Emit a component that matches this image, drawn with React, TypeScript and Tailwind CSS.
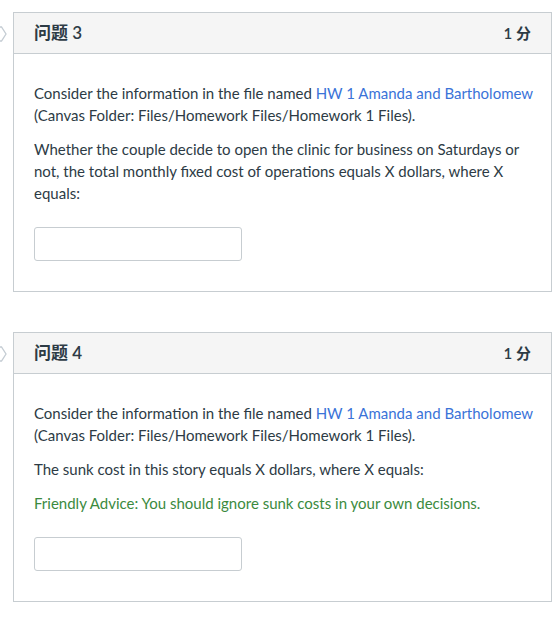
import type { ReactNode } from 'react';

function Flag() {
  return (
    <svg width="8" height="16" viewBox="0 0 8 16" className="absolute left-0 top-[14px]">
      <path d="M-4 1 H1.5 L6 8 L1.5 15 H-4" fill="none" stroke="#c4ccd3" strokeWidth="1.3" />
    </svg>
  );
}

function QuestionCard({ num, children }: { num: number; children: ReactNode }) {
  return (
    <div className="relative pl-[13px] pr-[8px]">
      <Flag />
      <div className="border border-[#c7cdd1] bg-white">
        <div className="flex h-[41px] items-center justify-between border-b border-[#c7cdd1] bg-[#f5f5f5] px-[20px] text-[17px] font-semibold text-[#2d3b45]">
          <span>问题 {num}</span>
          <span className="text-[15px]">1 分</span>
        </div>
        <div className="pl-[20px] pr-[12px] pt-[28px] pb-[30px] text-[15px] leading-[22px] text-[#2d3b45]">
          {children}
          <input
            type="text"
            className="mt-[23px] block h-[34px] w-[208px] rounded-[3px] border border-[#c7cdd1] bg-white"
          />
        </div>
      </div>
    </div>
  );
}

function FileRef() {
  return (
    <p>
      Consider the information in the file named{' '}
      <span className="text-[#3a73d8]">HW 1 Amanda and Bartholomew</span> (Canvas Folder:
      Files/Homework Files/Homework 1 Files).
    </p>
  );
}

export default function App() {
  return (
    <div
      className="min-h-[620px] bg-white pt-[12px]"
      style={{ fontFamily: 'Lato, "Noto Sans CJK SC", sans-serif' }}
    >
      <div className="flex flex-col gap-[40px]">
        <QuestionCard num={3}>
          <FileRef />
          <p className="mt-[12px] pr-[8px]">
            Whether the couple decide to open the clinic for business on Saturdays or not, the
            total monthly fixed cost of operations equals X dollars, where X equals:
          </p>
        </QuestionCard>
        <QuestionCard num={4}>
          <FileRef />
          <p className="mt-[12px]">The sunk cost in this story equals X dollars, where X equals:</p>
          <p className="mt-[12px] text-[#3b8a3e]">
            Friendly Advice: You should ignore sunk costs in your own decisions.
          </p>
        </QuestionCard>
      </div>
    </div>
  );
}
